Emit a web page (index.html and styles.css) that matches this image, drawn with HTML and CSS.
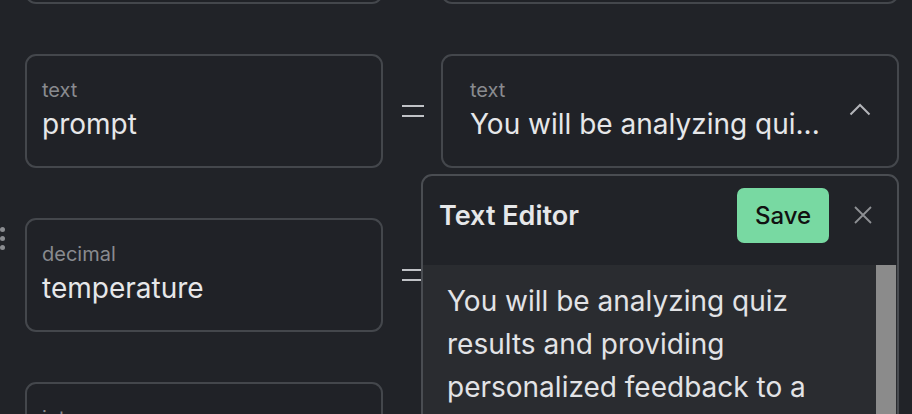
FILE: index.html
```html
<!DOCTYPE html>
<html>
<head>
<meta charset="utf-8">
<link rel="stylesheet" href="styles.css">
</head>
<body>
<div class="list">
  <div class="row">
    <div class="field"><div class="label">text</div><div class="value">system</div></div>
    <div class="eq"><span></span><span></span></div>
    <div class="field"><div class="label">text</div><div class="value">Hello</div></div>
  </div>
  <div class="row">
    <div class="field"><div class="label">text</div><div class="value">prompt</div></div>
    <div class="eq"><span></span><span></span></div>
    <div class="cell">
      <div class="field field-select">
        <div class="field-main"><div class="label">text</div><div class="value">You will be analyzing qui...</div></div>
        <svg class="chevron" width="22" height="14" viewBox="0 0 22 14"><path d="M1.5 12.5 L11 3 L20.5 12.5" fill="none" stroke="#b3b5b9" stroke-width="2"/></svg>
      </div>
      <div class="popover">
        <div class="pop-head">
          <div class="pop-title">Text Editor</div>
          <button class="save">Save</button>
          <svg class="close" width="20" height="20" viewBox="0 0 20 20"><path d="M2 2 L18 18 M18 2 L2 18" stroke="#8e9094" stroke-width="1.8" fill="none"/></svg>
        </div>
        <div class="pop-body">
          <div class="pop-text">You will be analyzing quiz results and providing personalized feedback to a student based on their answers and performance.</div>
          <div class="scrollbar"></div>
        </div>
      </div>
    </div>
  </div>
  <div class="row">
    <div class="grip"><span></span><span></span><span></span><span></span><span></span><span></span></div>
    <div class="field"><div class="label">decimal</div><div class="value">temperature</div></div>
    <div class="eq"><span></span><span></span></div>
    <div class="field"><div class="label">decimal</div><div class="value">0.7</div></div>
  </div>
  <div class="row">
    <div class="field"><div class="label">integer</div><div class="value">max_tokens</div></div>
    <div class="eq"><span></span><span></span></div>
    <div class="field"><div class="label">integer</div><div class="value">1024</div></div>
  </div>
</div>
</body>
</html>
```
FILE: styles.css
```css
html, body {
  margin: 0;
  padding: 0;
  background: #212328;
  overflow: hidden;
  height: 414px;
}
body {
  font-family: Inter, "Noto Sans", sans-serif;
  color: #e4e5e8;
}
.list {
  margin-top: -110px;
  padding-left: 25px;
  display: flex;
  flex-direction: column;
  gap: 50px;
}
.row {
  position: relative;
  display: grid;
  grid-template-columns: 358px 58px 458px;
  height: 114px;
}
.cell {
  position: relative;
}
.field {
  box-sizing: border-box;
  height: 114px;
  border: 2px solid #44474c;
  border-radius: 11px;
  padding: 20px 16px 0 15px;
  background: #202227;
}
.field-select {
  display: flex;
  align-items: center;
  padding: 0 26px 0 27px;
}
.field-main {
  flex: 1;
  margin-top: -2px;
}
.label {
  font-size: 20px;
  line-height: 28px;
  color: #898b8f;
}
.value {
  font-size: 28px;
  line-height: 40px;
  color: #e6e7e9;
  white-space: nowrap;
}
.eq {
  display: flex;
  flex-direction: column;
  align-items: center;
  justify-content: center;
  gap: 8px;
  padding-left: 1px;
}
.eq span {
  width: 22px;
  height: 2px;
  background: #c0c2c6;
}
.chevron {
  margin-top: -4px;
}
.grip {
  position: absolute;
  left: -34px;
  top: 9px;
  display: grid;
  grid-template-columns: 5px 5px;
  gap: 4px 4px;
}
.grip span {
  width: 5px;
  height: 5px;
  border-radius: 50%;
  background: #8a8c90;
}
.popover {
  position: absolute;
  left: -20px;
  right: 0;
  top: 120px;
  height: 260px;
  border: 2px solid #4a4d52;
  border-radius: 11px;
  background: #212328;
  overflow: hidden;
  z-index: 5;
}
.pop-head {
  height: 89px;
  display: flex;
  align-items: center;
  padding: 0 24px 0 16px;
  box-sizing: border-box;
}
.pop-title {
  flex: 1;
  font-size: 27px;
  font-weight: 600;
  color: #e6e7e9;
  margin-top: -10px;
}
.save {
  width: 92px;
  height: 55px;
  border: none;
  border-radius: 7px;
  background: #78d9a2;
  color: #111;
  font-family: Inter, "Noto Sans", sans-serif;
  font-size: 24px;
  font-weight: 500;
  margin-top: -10px;
  margin-right: 24px;
}
.close {
  margin-top: -12px;
}
.pop-body {
  display: flex;
  background: #2a2c30;
  height: 200px;
}
.pop-text {
  flex: 1;
  padding: 15px 30px 0 24px;
  font-size: 28px;
  line-height: 43px;
  color: #e2e3e6;
}
.scrollbar {
  width: 20px;
  background: #8b8b8b;
  margin-right: 1px;
}
```
